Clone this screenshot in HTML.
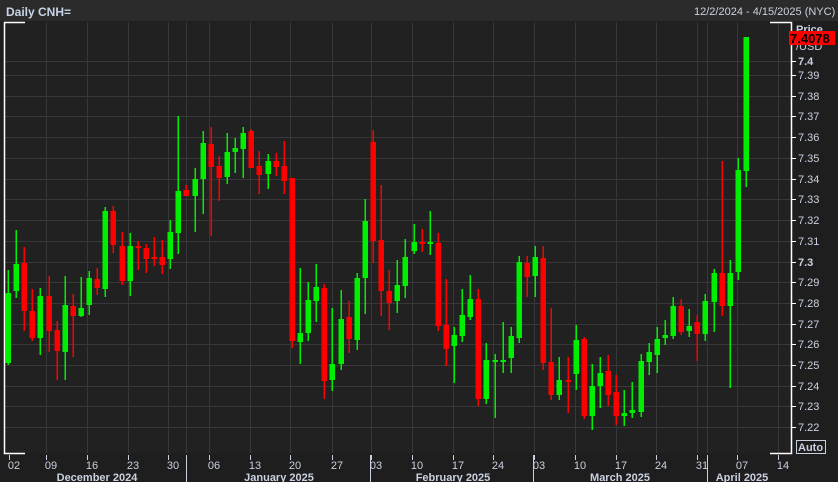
<!DOCTYPE html>
<html><head><meta charset="utf-8"><style>
html,body{margin:0;padding:0;background:#1e1e1e;}
body{width:838px;height:482px;overflow:hidden;position:relative;font-family:"Liberation Sans",sans-serif;}
#hdr{position:absolute;left:0;top:0;width:838px;height:21px;background:#2b2b2b;}
.t{position:absolute;color:#c9d1e0;font-size:11px;white-space:nowrap;}
svg{position:absolute;left:0;top:0;}
</style></head><body>
<div id="hdr"></div>
<div class="t" style="left:6px;top:5px;font-size:12px;font-weight:bold;color:#c8d4e8">Daily CNH=</div>
<div class="t" style="left:694px;top:6px;font-size:11px;">12/2/2024 - 4/15/2025 (NYC)</div>
<svg id="s" width="838" height="482" xmlns="http://www.w3.org/2000/svg">
<rect x="5" y="22" width="786" height="431" fill="#212121"/>
<g id="grid" stroke="#383838" stroke-width="1"></g>
<g id="c"></g>
<g stroke="#ffffff" stroke-width="1.5" fill="none">
<path d="M25 22.5H4.5V453.5H25"/>
<path d="M770 22.5H791.5V453.5H770"/>
</g>
<g id="ticks" stroke="#ffffff" stroke-width="1"></g>
<text x="796" y="33" font-family="Liberation Sans" font-size="11" font-weight="bold" fill="#c9d1e0">Price</text>
<text x="796" y="50" font-family="Liberation Sans" font-size="11" fill="#c9d1e0">/USD</text>
<rect x="789" y="31" width="46" height="14" fill="#ff0000"/>
<text x="790" y="43" font-family="Liberation Sans" font-size="13" font-weight="bold" fill="#000">7.4078</text>
<g id="yl" font-family="Liberation Sans" font-size="11" fill="#c9d1e0"></g>
<rect x="796.5" y="440.5" width="29" height="13" fill="none" stroke="#c9d1e0"/>
<text x="798" y="451" font-family="Liberation Sans" font-size="11" font-weight="bold" fill="#c9d1e0">Auto</text>
<g id="xl" font-family="Liberation Sans" font-size="11" fill="#c9d1e0" text-anchor="middle"></g>
<g font-family="Liberation Sans" font-size="11" font-weight="bold" fill="#c9d1e0" text-anchor="middle">
<text x="97" y="481">December 2024</text>
<text x="279" y="481">January 2025</text>
<text x="453" y="481">February 2025</text>
<text x="620" y="481">March 2025</text>
<text x="742" y="481">April 2025</text>
</g>
</svg>
<script>
var NS="http://www.w3.org/2000/svg";
function el(p,n,a,txt){var e=document.createElementNS(NS,n);for(var k in a)e.setAttribute(k,a[k]);if(txt)e.textContent=txt;document.getElementById(p).appendChild(e);}
var ylab=[["7.4",61,1],["7.39",75],["7.38",96],["7.37",116],["7.36",137],["7.35",158],["7.34",179],["7.33",199],["7.32",220],["7.31",241],["7.3",262,1],["7.29",282],["7.28",303],["7.27",324],["7.26",344],["7.25",365],["7.24",386],["7.23",406],["7.22",427]];
ylab.forEach(function(l){
 el("grid","line",{x1:5,x2:791,y1:l[1]+.5,y2:l[1]+.5});
 el("ticks","line",{x1:791,x2:796,y1:l[1]+.5,y2:l[1]+.5});
 var a={x:798,y:l[1]+4};if(l[2])a["font-weight"]="bold";
 el("yl","text",a,l[0]);
});
var xs=[["02",12],["09",49],["16",90],["23",131],["30",171],["06",212],["13",253],["20",293],["27",335],["03",374],["10",415],["17",456],["24",496],["03",537],["10",578],["17",619],["24",659],["31",700],["07",740],["14",781]];
xs.forEach(function(d,i){
 if(i>0)el("grid","line",{x1:d[1]-2.5,x2:d[1]-2.5,y1:22,y2:453});
 el("ticks","line",{x1:d[1]-2.5,x2:d[1]-2.5,y1:455,y2:460,stroke:"#c9d1e0"});
 el("xl","text",{x:d[1]+2,y:469},d[0]);
});
[186,707].forEach(function(x){el("grid","line",{x1:x+.5,x2:x+.5,y1:22,y2:453});});
[186,370,533,707].forEach(function(x){el("ticks","line",{x1:x+.5,x2:x+.5,y1:455,y2:482,stroke:"#c9d1e0"});});
var C=[[293,363,270,365,1],[264,291,230,298,1],[263,311,247,331,0],[311,338,289,341,0],[296,338,288,355,1],[296,331,276,352,0],[330,351,321,380,0],[305,352,276,380,1],[306,316,294,357,0],[308,316,277,317,1],[278,305,271,315,1],[279,288,268,295,0],[211,289,207,297,1],[211,245,206,253,0],[246,281,232,285,0],[246,281,233,296,1],[246,248,241,270,0],[248,259,244,273,0],[257,259,237,266,0],[257,265,240,274,0],[232,259,220,269,1],[191,233,116,254,1],[190,196,185,196,0],[179,196,168,232,1],[143,179,131,214,1],[144,167,127,236,0],[166,178,156,201,0],[152,177,133,184,1],[148,152,138,173,1],[133,149,127,178,1],[131,168,129,168,0],[166,175,151,194,0],[161,174,154,189,1],[161,167,153,176,0],[166,181,141,194,0],[178,341,178,348,0],[333,342,268,364,1],[300,333,282,341,1],[287,301,264,322,1],[288,381,284,399,0],[364,380,308,391,1],[319,364,290,370,1],[317,339,301,353,0],[278,340,273,350,1],[221,278,199,314,1],[142,241,130,263,0],[240,291,185,316,0],[291,303,270,330,0],[285,301,260,313,1],[257,286,239,298,1],[242,251,224,254,1],[242,244,229,252,0],[242,244,211,255,1],[243,326,233,331,0],[325,349,279,366,0],[335,346,327,383,1],[315,336,289,342,1],[299,317,275,320,1],[299,399,289,406,0],[360,399,343,404,1],[360,362,354,418,1],[360,362,322,373,1],[336,358,327,373,1],[262,338,256,343,1],[263,277,256,297,0],[257,276,246,297,1],[258,363,246,370,0],[362,395,308,400,0],[380,395,357,400,1],[380,382,357,413,0],[340,374,325,390,1],[339,416,337,419,0],[386,416,364,430,1],[373,386,357,408,1],[371,395,355,406,0],[392,416,375,425,0],[413,416,390,426,1],[410,413,382,418,1],[361,412,354,417,1],[352,362,343,375,1],[339,355,327,373,1],[335,338,320,345,1],[306,336,297,339,1],[306,332,299,335,0],[326,331,309,337,1],[322,334,315,361,0],[301,334,294,341,1],[273,302,269,332,1],[273,306,161,316,0],[273,306,260,388,1],[170,272,158,280,1],[37,171,37,187,1]];
C.forEach(function(c,i){
 var x=Math.round(8+i*8.11);var col=c[4]?"#00ee00":"#ff0000";
 el("c","rect",{x:x-0.5,y:c[2],width:1.5,height:c[3]-c[2],fill:col});
 el("c","rect",{x:x-2.5,y:c[0],width:5.5,height:Math.max(2,c[1]-c[0]),fill:col});
});
</script>
</body></html>
